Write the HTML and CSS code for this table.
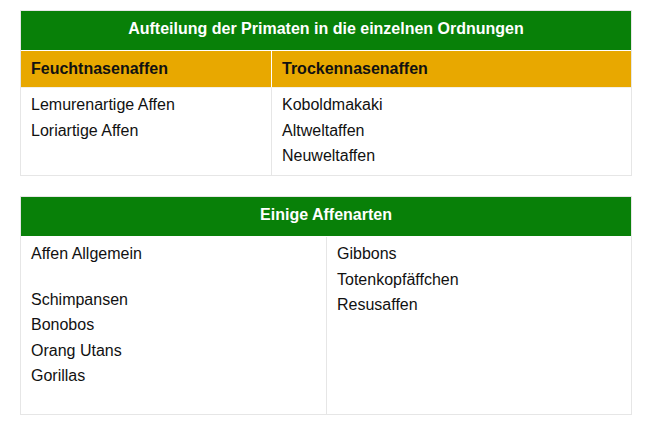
FILE: index.html
```html
<!DOCTYPE html>
<html lang="de">
<head>
<meta charset="utf-8">
<title>Primaten</title>
<link rel="stylesheet" href="styles.css">
</head>
<body>
<main class="page">
  <section class="panel panel-orders">
    <h2 class="panel-title">Aufteilung der Primaten in die einzelnen Ordnungen</h2>
    <div class="grid grid-orders head">
      <div class="cell">Feuchtnasenaffen</div>
      <div class="cell cell-right">Trockennasenaffen</div>
    </div>
    <div class="grid grid-orders body body-orders">
      <ul class="cell list">
        <li>Lemurenartige Affen</li>
        <li>Loriartige Affen</li>
      </ul>
      <ul class="cell cell-right list">
        <li>Koboldmakaki</li>
        <li>Altweltaffen</li>
        <li>Neuweltaffen</li>
      </ul>
    </div>
  </section>

  <section class="panel panel-species">
    <h2 class="panel-title">Einige Affenarten</h2>
    <div class="grid grid-species body body-species">
      <ul class="cell list">
        <li class="lead">Affen Allgemein</li>
        <li>Schimpansen</li>
        <li>Bonobos</li>
        <li>Orang Utans</li>
        <li>Gorillas</li>
      </ul>
      <ul class="cell cell-right list">
        <li>Gibbons</li>
        <li>Totenkopfäffchen</li>
        <li>Resusaffen</li>
      </ul>
    </div>
  </section>
</main>
</body>
</html>
```

FILE: styles.css
```css
* {
  box-sizing: border-box;
}

html, body {
  margin: 0;
  padding: 0;
  background: #ffffff;
}

body {
  font-family: "Liberation Sans", Arial, Helvetica, sans-serif;
  font-size: 16px;
  color: #111111;
}

.page {
  padding: 10px 0 0 20px;
  display: flex;
  flex-direction: column;
  gap: 20px;
}

.panel {
  width: 612px;
  border: 1px solid #e6e6e6;
}

.panel-title {
  margin: 0;
  height: 40px;
  line-height: 36px;
  background: #088008;
  color: #ffffff;
  font-size: 16px;
  font-weight: bold;
  text-align: center;
  border-bottom: 1px solid #ffffff;
}

.grid {
  display: grid;
}

.grid-orders {
  grid-template-columns: 250px 360px;
}

.grid-species {
  grid-template-columns: 305px 305px;
}

.head {
  height: 37px;
  background: #e8a800;
  border-bottom: 1px solid #f3f0e6;
}

.head .cell {
  line-height: 36px;
  font-weight: bold;
  color: #111111;
}

.head .cell-right {
  border-left: 1px solid #ffffff;
}

.cell {
  padding-left: 10px;
}

.body .cell-right {
  border-left: 1px solid #e6e6e6;
}

.body-orders {
  height: 87px;
}

.body-species {
  height: 177px;
}

.list {
  margin: 0;
  padding-top: 4px;
  list-style: none;
  line-height: 25.6px;
}

.list li {
  margin: 0;
}

.list .lead {
  margin-bottom: 20px;
}
```
